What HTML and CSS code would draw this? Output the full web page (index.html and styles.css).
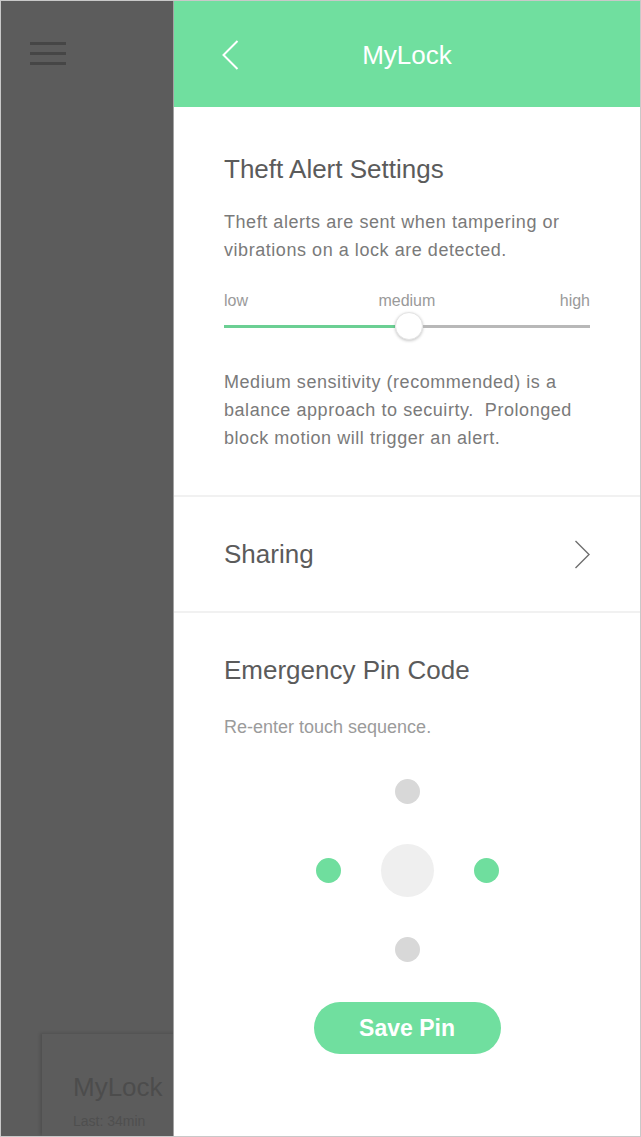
FILE: index.html
```html
<!DOCTYPE html>
<html lang="en">
<head>
<meta charset="utf-8">
<title>MyLock</title>
<link rel="stylesheet" href="styles.css">
</head>
<body>
<div class="app">
  <aside class="drawer">
    <div class="hamburger">
      <span class="bar"></span>
      <span class="bar"></span>
      <span class="bar"></span>
    </div>
    <div class="lock-card">
      <div class="lock-name">MyLock</div>
      <div class="lock-last">Last: 34min</div>
    </div>
  </aside>
  <main class="panel">
    <header class="topbar">
      <div class="back">
        <svg width="17" height="30" viewBox="0 0 17 30"><polyline points="15.5,1 1.5,15 15.5,29" fill="none" stroke="#ffffff" stroke-width="2"/></svg>
      </div>
      <h1 class="title">MyLock</h1>
      <div class="spacer"></div>
    </header>

    <section class="section theft">
      <h2 class="heading">Theft Alert Settings</h2>
      <p class="desc first">Theft alerts are sent when tampering or vibrations on a lock are detected.</p>
      <div class="levels">
        <span>low</span>
        <span>medium</span>
        <span>high</span>
      </div>
      <div class="slider">
        <div class="fill"></div>
        <div class="thumb"></div>
        <div class="rest"></div>
      </div>
      <p class="desc second">Medium sensitivity (recommended) is a balance approach to secuirty.&nbsp; Prolonged block motion will trigger an alert.</p>
    </section>

    <section class="sharing">
      <span class="heading">Sharing</span>
      <svg width="17" height="29" viewBox="0 0 17 29"><polyline points="1.5,1 15,14.5 1.5,28" fill="none" stroke="#6f6f6f" stroke-width="1.4"/></svg>
    </section>

    <section class="section pin">
      <h2 class="heading">Emergency Pin Code</h2>
      <p class="hint">Re-enter touch sequence.</p>
      <div class="pad">
        <span></span><span class="dot gray"></span><span></span>
        <span class="dot green"></span><span class="dot center"></span><span class="dot green"></span>
        <span></span><span class="dot gray"></span><span></span>
      </div>
      <div class="actions">
        <button class="save">Save Pin</button>
      </div>
    </section>
  </main>
</div>
</body>
</html>
```

FILE: styles.css
```css
* { box-sizing: border-box; }

html, body {
  margin: 0;
  padding: 0;
  overflow: hidden;
  background: #ffffff;
  font-family: "Liberation Sans", Arial, Helvetica, sans-serif;
}

.app {
  width: 641px;
  height: 1137px;
  border: 1px solid #c9c9c9;
  display: flex;
  overflow: hidden;
}

/* ---------- drawer (dimmed) ---------- */
.drawer {
  width: 173px;
  flex: none;
  background: #5c5c5c;
  border-right: 1px solid #a3a3a3;
  display: flex;
  flex-direction: column;
  overflow: hidden;
}

.hamburger {
  margin: 41px 0 0 29px;
  display: flex;
  flex-direction: column;
  gap: 7px;
}

.bar {
  display: block;
  width: 36px;
  height: 3px;
  background: #464646;
}

.lock-card {
  margin-top: auto;
  margin-left: 41px;
  width: 260px;
  flex: none;
  height: 102px;
  padding: 38px 0 0 31px;
  background: #5c5c5c;
  box-shadow: -2px -1px 3px rgba(0, 0, 0, 0.14);
}

.lock-name {
  font-size: 26px;
  line-height: 30px;
  color: #4c4c4c;
  white-space: nowrap;
}

.lock-last {
  margin-top: 10px;
  font-size: 14px;
  line-height: 18px;
  color: #4f4f4f;
  white-space: nowrap;
}

/* ---------- panel ---------- */
.panel {
  flex: 1;
  display: flex;
  flex-direction: column;
  background: #ffffff;
}

.topbar {
  height: 106px;
  flex: none;
  padding-top: 1px;
  background: #70df9f;
  display: grid;
  grid-template-columns: 1fr auto 1fr;
  align-items: center;
}

.back {
  padding-left: 48px;
  display: flex;
  align-items: center;
}

.title {
  margin: 0;
  font-size: 26px;
  line-height: 30px;
  font-weight: normal;
  color: #ffffff;
}

.heading {
  margin: 0;
  font-size: 26px;
  line-height: 30px;
  font-weight: normal;
  color: #5b5b5b;
}

.section {
  padding: 0 50px;
}

.theft {
  padding-top: 47px;
  padding-bottom: 43px;
  border-bottom: 2px solid #f1f1f1;
}

.desc {
  margin: 0;
  font-size: 18px;
  line-height: 28px;
  letter-spacing: 0.55px;
  color: #7a7a7a;
}

.desc.first { margin-top: 24px; }
.desc.second { margin-top: 28px; }

.levels {
  margin-top: 27px;
  display: flex;
  justify-content: space-between;
  font-size: 16px;
  line-height: 20px;
  color: #9a9a9a;
}

.levels span:nth-child(2) { margin-left: 6px; }

.slider {
  margin-top: 1px;
  height: 28px;
  display: flex;
  align-items: center;
}

.fill {
  width: 171px;
  height: 3px;
  background: #6bcf93;
}

.thumb {
  width: 28px;
  height: 28px;
  flex: none;
  border-radius: 50%;
  background: #ffffff;
  border: 1px solid #e4e4e4;
  box-shadow: 0 1px 3px rgba(0, 0, 0, 0.22);
}

.rest {
  flex: 1;
  height: 3px;
  background: #b8b8b8;
}

.sharing {
  height: 116px;
  flex: none;
  padding: 0 49px 0 50px;
  display: flex;
  align-items: center;
  justify-content: space-between;
  border-bottom: 2px solid #f1f1f1;
}

.pin {
  padding-top: 42px;
}

.hint {
  margin: 28px 0 0;
  font-size: 18px;
  line-height: 28px;
  color: #9b9b9b;
}

.pad {
  margin: 24px auto 0;
  width: 211px;
  display: grid;
  grid-template-columns: repeat(3, 53px);
  grid-template-rows: repeat(3, 53px);
  column-gap: 26px;
  row-gap: 26px;
  place-items: center;
}

.dot {
  display: block;
  border-radius: 50%;
  width: 25px;
  height: 25px;
}

.dot.gray { background: #d8d8d8; }
.dot.green { background: #6fde9e; }
.dot.center {
  width: 53px;
  height: 53px;
  background: #efefef;
}

.actions {
  margin-top: 26px;
  display: flex;
  justify-content: center;
}

.save {
  width: 187px;
  height: 52px;
  border: none;
  border-radius: 26px;
  background: #70df9f;
  color: #ffffff;
  font-family: "Liberation Sans", Arial, Helvetica, sans-serif;
  font-size: 23px;
  font-weight: bold;
  padding: 0;
}
```
